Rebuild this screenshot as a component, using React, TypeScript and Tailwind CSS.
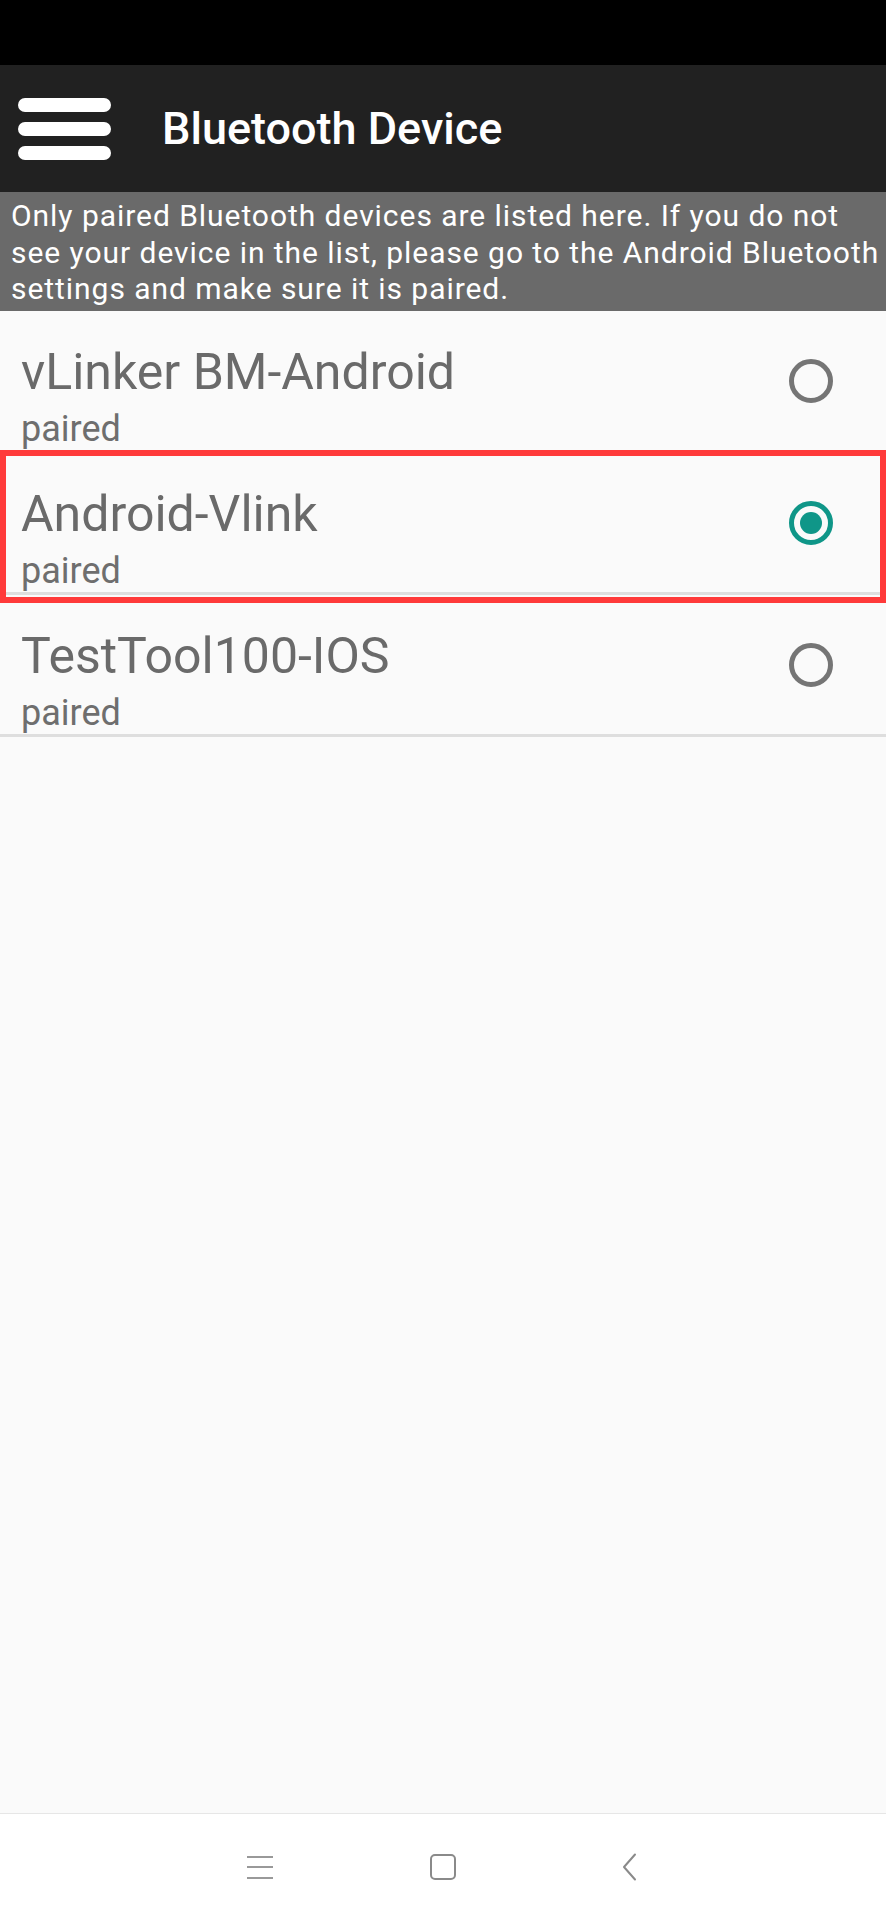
import React from 'react';

interface Device {
  name: string;
  status: string;
  selected?: boolean;
}

const devices: Device[] = [
  { name: 'vLinker BM-Android', status: 'paired' },
  { name: 'Android-Vlink', status: 'paired', selected: true },
  { name: 'TestTool100-IOS', status: 'paired' },
];

const Radio = ({ checked }: { checked?: boolean }) =>
  checked ? (
    <div className="w-[44px] h-[44px] rounded-full border-[5px] border-[#0f9688] flex items-center justify-center">
      <div className="w-[22px] h-[22px] rounded-full bg-[#0f9688]" />
    </div>
  ) : (
    <div className="w-[44px] h-[44px] rounded-full border-[5px] border-[#757575]" />
  );

const DeviceRow = ({ device }: { device: Device }) => (
  <div className="relative">
    <div className="h-[139px] flex items-center justify-between pl-[21px] pr-[53px]">
      <div className="pt-[32px] h-full">
        <div className="text-[50px] leading-[58px] text-[#6a6a6a]">{device.name}</div>
        <div className="mt-[7px] text-[36px] leading-[42px] text-[#6e6e6e]">{device.status}</div>
      </div>
      <Radio checked={device.selected} />
    </div>
    <div className="h-[3px] bg-[#dedede]" />
    {device.selected && (
      <div className="absolute left-0 right-0 -top-[3px] -bottom-[8px] border-[6px] border-[#ff3a3a] pointer-events-none" />
    )}
  </div>
);

export default function App() {
  return (
    <div
      className="w-[886px] h-[1920px] flex flex-col bg-[#fafafa]"
      style={{ fontFamily: 'Roboto, "Noto Sans", sans-serif' }}
    >
      <div className="h-[65px] bg-black" />

      <div className="h-[127px] bg-[#212121] flex items-center pl-[18px]">
        <div className="flex flex-col gap-[10px]">
          <div className="w-[93px] h-[14px] rounded-full bg-white" />
          <div className="w-[93px] h-[14px] rounded-full bg-white" />
          <div className="w-[93px] h-[14px] rounded-full bg-white" />
        </div>
        <div className="ml-[51px] text-white text-[45px] font-medium leading-none">Bluetooth Device</div>
      </div>

      <div className="h-[119px] bg-[#6a6a6a] text-white text-[30px] leading-[36.5px] tracking-[0.95px] pl-[11px] pt-[6px] whitespace-nowrap">
        Only paired Bluetooth devices are listed here. If you do not
        <br />
        see your device in the list, please go to the Android Bluetooth
        <br />
        settings and make sure it is paired.
      </div>

      <div>
        {devices.map((d) => (
          <DeviceRow key={d.name} device={d} />
        ))}
      </div>

      <div className="flex-1" />

      <div className="h-[107px] bg-white border-t border-[#e6e6e6] flex items-center pl-[247px]">
        <div className="flex flex-col gap-[8.5px]">
          <div className="w-[26px] h-[2px] bg-[#999]" />
          <div className="w-[26px] h-[2px] bg-[#999]" />
          <div className="w-[26px] h-[2px] bg-[#999]" />
        </div>
        <div className="ml-[157px] w-[26px] h-[26px] rounded-[5px] border-2 border-[#8a8a8a]" />
        <svg className="ml-[165px]" width="16" height="28" viewBox="0 0 16 28" fill="none">
          <path d="M14 1.5 L3 14 L14 26.5" stroke="#8a8a8a" strokeWidth="2" strokeLinecap="round" strokeLinejoin="round" />
        </svg>
      </div>
    </div>
  );
}
